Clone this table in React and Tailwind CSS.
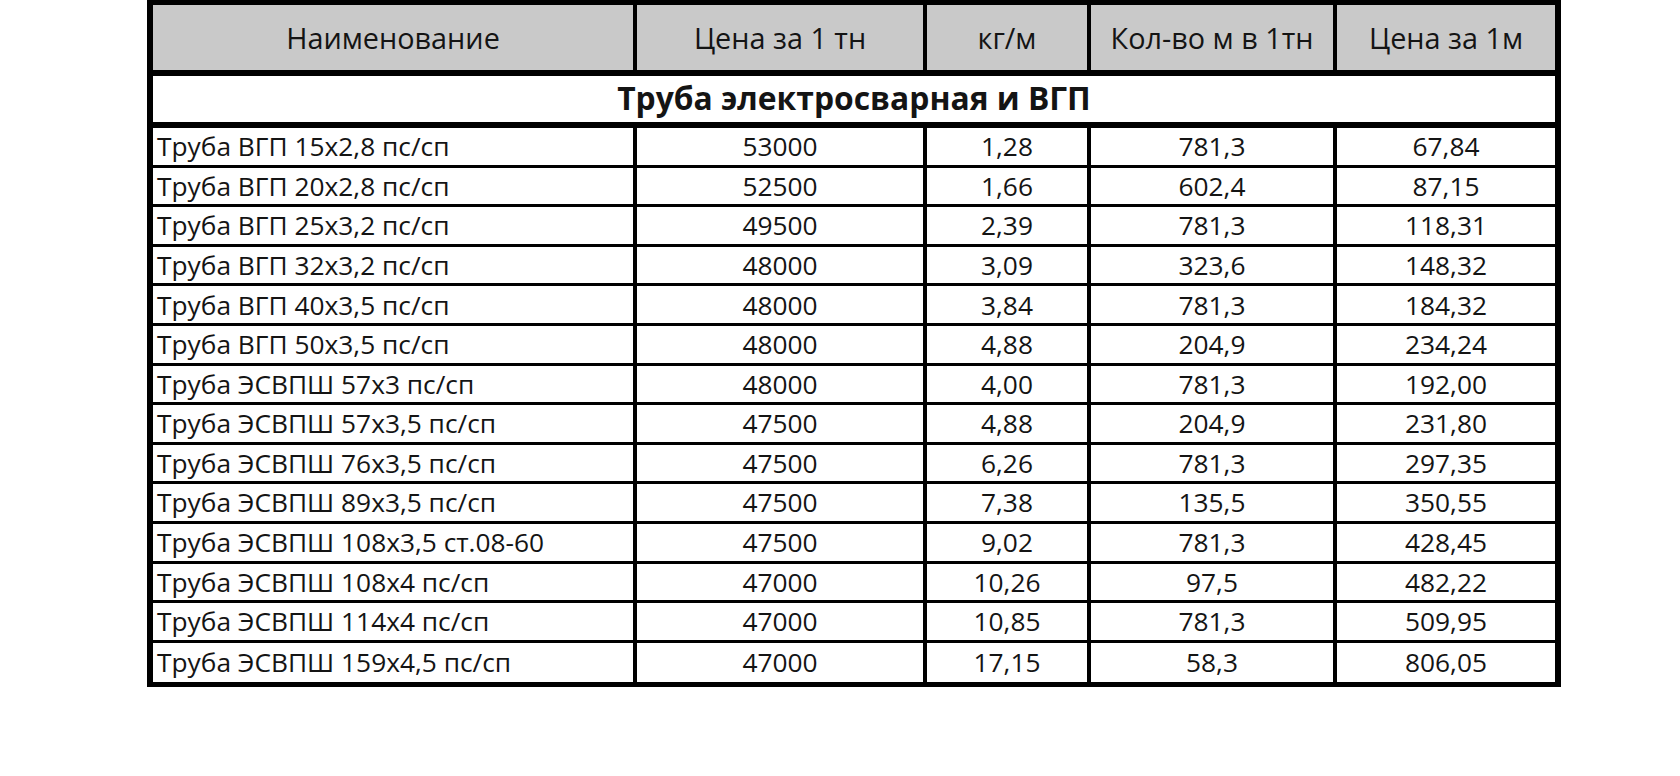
import React from "react";

const rows = [
  ["Труба ВГП 15х2,8 пс/сп", "53000", "1,28", "781,3", "67,84"],
  ["Труба ВГП 20х2,8 пс/сп", "52500", "1,66", "602,4", "87,15"],
  ["Труба ВГП 25х3,2 пс/сп", "49500", "2,39", "781,3", "118,31"],
  ["Труба ВГП 32х3,2 пс/сп", "48000", "3,09", "323,6", "148,32"],
  ["Труба ВГП 40х3,5 пс/сп", "48000", "3,84", "781,3", "184,32"],
  ["Труба ВГП 50х3,5 пс/сп", "48000", "4,88", "204,9", "234,24"],
  ["Труба ЭСВПШ 57х3 пс/сп", "48000", "4,00", "781,3", "192,00"],
  ["Труба ЭСВПШ 57х3,5 пс/сп", "47500", "4,88", "204,9", "231,80"],
  ["Труба ЭСВПШ 76х3,5 пс/сп", "47500", "6,26", "781,3", "297,35"],
  ["Труба ЭСВПШ 89х3,5 пс/сп", "47500", "7,38", "135,5", "350,55"],
  ["Труба ЭСВПШ 108х3,5 ст.08-60", "47500", "9,02", "781,3", "428,45"],
  ["Труба ЭСВПШ 108х4 пс/сп", "47000", "10,26", "97,5", "482,22"],
  ["Труба ЭСВПШ 114х4 пс/сп", "47000", "10,85", "781,3", "509,95"],
  ["Труба ЭСВПШ 159х4,5 пс/сп", "47000", "17,15", "58,3", "806,05"],
];

const headers = ["Наименование", "Цена за 1 тн", "кг/м", "Кол-во м в 1тн", "Цена за 1м"];

const grid = "grid grid-cols-[480px_290px_164px_246px_222px]";

export default function App() {
  return (
    <div
      className="w-[1680px] h-[776px] bg-white text-[#141414] overflow-hidden"
      style={{ fontFamily: "'Open Sans', Lato, sans-serif" }}
    >
      <div className="ml-[147px] w-[1414px] border-x-[6px] border-t-[5px] border-b-[5px] border-black">
        <div className={`${grid} h-[71px] border-b-[6px] border-black bg-[#c9c9c9]`}>
          {headers.map((h, i) => (
            <div
              key={i}
              className={`flex items-center justify-center pt-[2px] text-[28.8px] leading-none ${i > 0 ? "border-l-4 border-black" : ""}`}
            >
              {h}
            </div>
          ))}
        </div>
        <div className="h-[52px] border-b-[6px] border-black flex items-center justify-center pb-[2px] text-[31.8px] font-bold leading-none">
          Труба электросварная и ВГП
        </div>
        {rows.map((r, ri) => (
          <div
            key={ri}
            className={`${grid} ${ri < rows.length - 1 ? "h-[39.6px] border-b-[3px] border-black" : "h-[39.2px]"}`}
          >
            {r.map((c, ci) => (
              <div
                key={ci}
                className={`flex items-center text-[26.3px] leading-none ${ci === 0 ? "justify-start pl-[4px]" : "justify-center border-l-4 border-black"}`}
              >
                {c}
              </div>
            ))}
          </div>
        ))}
      </div>
    </div>
  );
}
